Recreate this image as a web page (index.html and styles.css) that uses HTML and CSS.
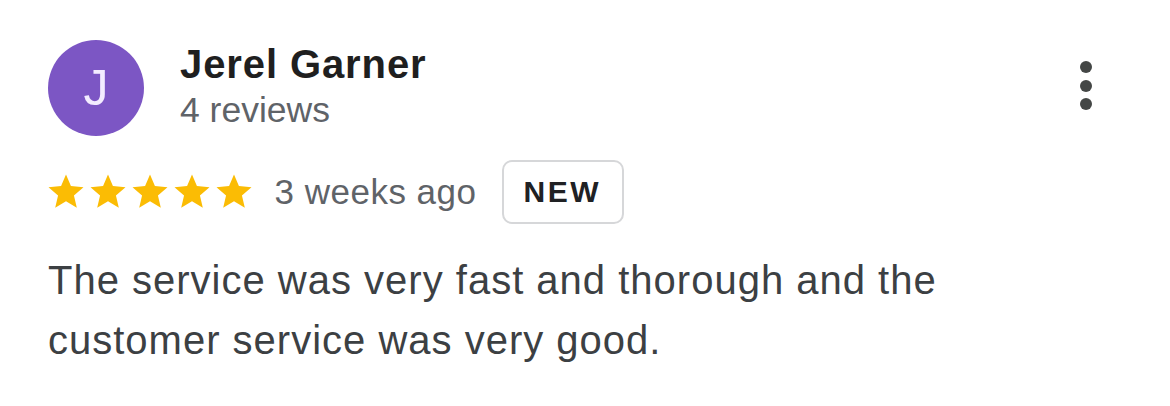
FILE: index.html
```html
<!DOCTYPE html>
<html lang="en">
<head>
    <meta charset="UTF-8">
    <meta name="viewport" content="width=device-width, initial-scale=1.0">
    <title>Review</title>
    <link rel="stylesheet" href="styles.css">
</head>
<body>

    <div class="review">
        <div class="review-header">
            <div class="author">
                <div class="avatar">J</div>
                <div class="author-info">
                    <div class="author-name">Jerel Garner</div>
                    <div class="author-meta">4 reviews</div>
                </div>
            </div>
            <button class="more-button" aria-label="More options">
                <span class="dot"></span>
                <span class="dot"></span>
                <span class="dot"></span>
            </button>
        </div>

        <div class="rating-row">
            <div class="stars">
                <svg class="star" viewBox="0 0 24 24"><path d="M12 17.27L18.18 21l-1.64-7.03L22 9.24l-7.19-.61L12 2 9.19 8.63 2 9.24l5.46 4.73L5.82 21z"/></svg>
                <svg class="star" viewBox="0 0 24 24"><path d="M12 17.27L18.18 21l-1.64-7.03L22 9.24l-7.19-.61L12 2 9.19 8.63 2 9.24l5.46 4.73L5.82 21z"/></svg>
                <svg class="star" viewBox="0 0 24 24"><path d="M12 17.27L18.18 21l-1.64-7.03L22 9.24l-7.19-.61L12 2 9.19 8.63 2 9.24l5.46 4.73L5.82 21z"/></svg>
                <svg class="star" viewBox="0 0 24 24"><path d="M12 17.27L18.18 21l-1.64-7.03L22 9.24l-7.19-.61L12 2 9.19 8.63 2 9.24l5.46 4.73L5.82 21z"/></svg>
                <svg class="star" viewBox="0 0 24 24"><path d="M12 17.27L18.18 21l-1.64-7.03L22 9.24l-7.19-.61L12 2 9.19 8.63 2 9.24l5.46 4.73L5.82 21z"/></svg>
            </div>
            <span class="review-date">3 weeks ago</span>
            <span class="badge">NEW</span>
        </div>

        <p class="review-text">The service was very fast and thorough and the customer service was very good.</p>
    </div>

</body>
</html>
```

FILE: styles.css
```css
body {
    font-family: "Liberation Sans", Arial, sans-serif;
    margin: 0;
    background-color: #ffffff;
    color: #202124;
}

.review {
    padding: 40px 60px 0 48px;
}

.review-header {
    display: flex;
    justify-content: space-between;
    align-items: flex-start;
}

.author {
    display: flex;
    align-items: flex-start;
    gap: 36px;
}

/* 丸いアイコン */
.avatar {
    width: 96px;
    height: 96px;
    border-radius: 50%;
    background-color: #7c56c4;
    color: #f3ecff;
    font-size: 50px;
    display: flex;
    justify-content: center;
    align-items: center;
}

.author-name {
    font-size: 40px;
    font-weight: bold;
    line-height: 48px;
    letter-spacing: 0.9px;
    color: #1f1f1f;
}

.author-meta {
    font-size: 35.5px;
    line-height: 44px;
    color: #5f6368;
}

.more-button {
    width: 48px;
    margin-top: 21px;
    padding: 0;
    border: none;
    background: none;
    display: flex;
    flex-direction: column;
    align-items: center;
    gap: 6.5px;
    cursor: pointer;
}

.dot {
    width: 12px;
    height: 12px;
    border-radius: 50%;
    background-color: #444746;
}

.rating-row {
    display: flex;
    align-items: center;
    height: 64px;
    margin-top: 24px;
}

.stars {
    display: flex;
    margin-left: -3.5px;
}

.star {
    width: 42px;
    height: 42px;
    fill: #fbbc04;
}

.review-date {
    font-size: 35px;
    line-height: 40px;
    letter-spacing: 0.5px;
    color: #5f6368;
    margin-left: 20px;
}

.badge {
    margin-left: 25px;
    height: 64px;
    box-sizing: border-box;
    padding: 0 21px 0 20px;
    border: 2px solid #d6d7d9;
    border-radius: 10px;
    display: flex;
    align-items: center;
    font-size: 30px;
    font-weight: bold;
    letter-spacing: 2.5px;
    color: #202124;
}

.review-text {
    margin: 26px 0 0;
    width: 960px;
    font-size: 40px;
    line-height: 60px;
    letter-spacing: 1px;
    color: #3c4043;
}
```
